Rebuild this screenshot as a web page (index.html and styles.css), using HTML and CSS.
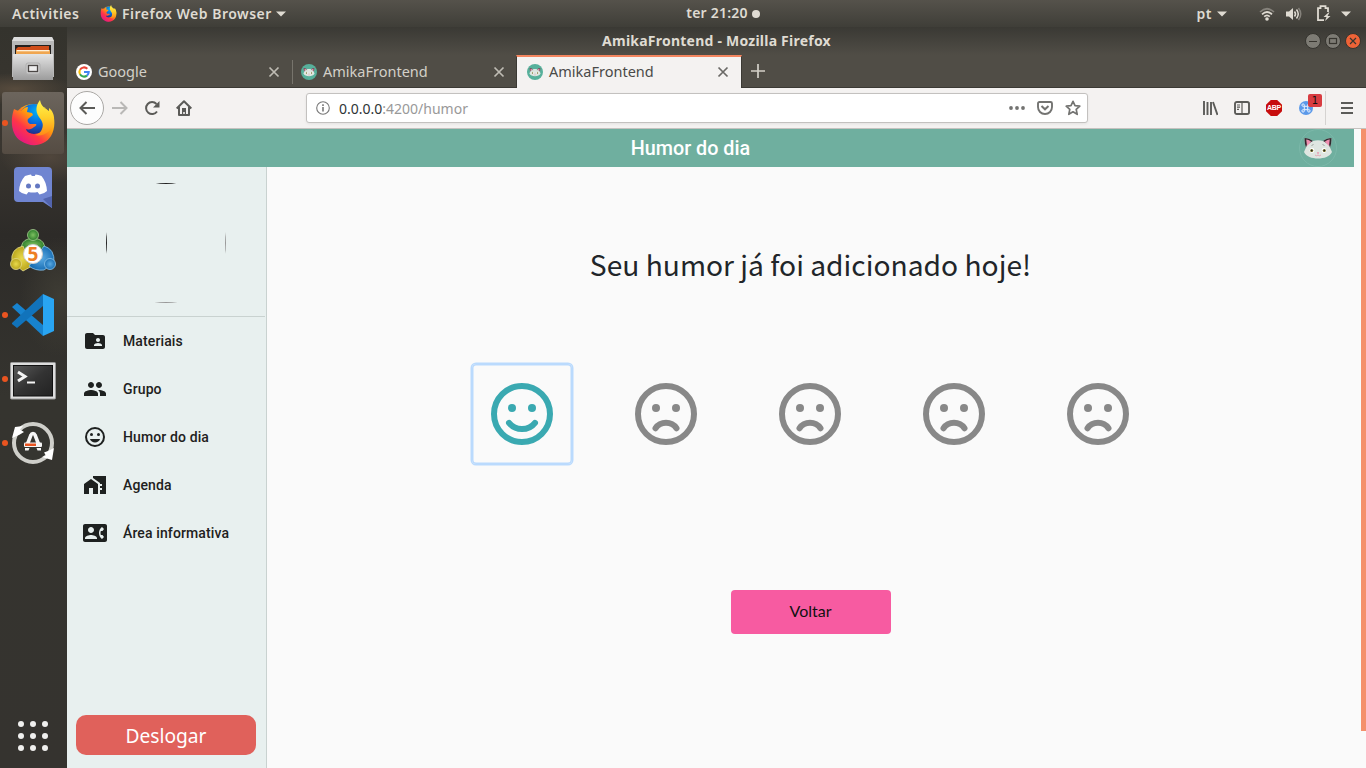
FILE: index.html
```
<!DOCTYPE html>
<html lang="pt">
<head>
<meta charset="utf-8">
<title>AmikaFrontend</title>
<link rel="stylesheet" href="styles.css">
</head>
<body>
<svg width="0" height="0" class="defs">
  <defs>
    <linearGradient id="ffBody" x1="0.85" y1="0.1" x2="0.15" y2="0.9"><stop offset="0" stop-color="#ffe226"/><stop offset=".35" stop-color="#ff980e"/><stop offset=".65" stop-color="#ff3647"/><stop offset="1" stop-color="#e31587"/></linearGradient>
    <linearGradient id="ffTail" x1="0" y1="0" x2="0" y2="1"><stop offset="0" stop-color="#fff44f"/><stop offset=".5" stop-color="#ffd02a"/><stop offset="1" stop-color="#ff8a16"/></linearGradient>
    <radialGradient id="ffGlobe" cx=".6" cy=".25" r=".8"><stop offset="0" stop-color="#00b3f4"/><stop offset=".5" stop-color="#0a69dd"/><stop offset="1" stop-color="#24287e"/></radialGradient>
    <linearGradient id="steel" x1="0" y1="0" x2="0" y2="1"><stop offset="0" stop-color="#e4e4e4"/><stop offset="1" stop-color="#9c9c9c"/></linearGradient>
    <linearGradient id="screen" x1="0" y1="0" x2="1" y2="1"><stop offset="0" stop-color="#5a5a5a"/><stop offset=".5" stop-color="#333"/><stop offset="1" stop-color="#222"/></linearGradient>
    <radialGradient id="mtG"><stop offset="0" stop-color="#7cc060"/><stop offset="1" stop-color="#2d7d2b"/></radialGradient>
    <radialGradient id="mtY"><stop offset="0" stop-color="#e9da4c"/><stop offset="1" stop-color="#b9a51c"/></radialGradient>
    <radialGradient id="mtB"><stop offset="0" stop-color="#5aaae2"/><stop offset="1" stop-color="#1a6fb5"/></radialGradient>
    <symbol id="firefox" viewBox="0 0 44 46">
      <circle cx="22" cy="24" r="20" fill="url(#ffBody)"/>
      <circle cx="23" cy="19" r="15" fill="url(#ffGlobe)"/>
      <path d="M3 9C-1 20 0 35 10 41c10 7 24 5 30-5 3-5 4-12 3-17-3 8-7 14-13 15-8 2-14-1-15-5 3 1 6 0 8-2 2-1 3-2 2-3h-6c-2-1-3-3-2-5l5-4-1-2-5-1 1-5c-3 0-5 2-7 4-3 0-5-1-7-2z" fill="url(#ffBody)"/>
      <path d="M29 0c-4 5-5 11-1 17 3 4 5 7 3 12-1 3-3 5-7 6 9 2 17-4 19-13 1-7-2-12-5-14v3c-4-2-8-5-9-11z" fill="url(#ffTail)"/>
    </symbol>
    <symbol id="cat" viewBox="0 0 30 24">
      <path d="M1.500 2c3 0 6 1 8.500 3 3-1 7-1 10 0 2.500-2 5.500-3 8.500-3 0 4-.5 7-1.500 9.500l2 4.500c-2 4.500-8 6.500-14 6.500S3 20.500 1 16l2-4.500C2 9 1.500 6 1.500 2z" fill="#dfe6e1"/>
      <path d="M1.500 2c3 0 6 1 8.500 3l-1.500.8-4.500 3L3 11.500C2 9 1.500 6 1.500 2zM28.500 2c-3 0-6 1-8.500 3l1.500.8 4.500 3 1 2.700C28 9 28.500 6 28.500 2z" fill="#30282d"/>
      <path d="M3.200 3.500c2 .2 3.800 1 5 2.200L4 10zM26.800 3.500c-2 .2-3.800 1-5 2.200L26 10z" fill="#f08fb0"/>
      <circle cx="9" cy="14.500" r="2.400" fill="#fff"/><circle cx="21" cy="14.500" r="2.400" fill="#fff"/>
      <circle cx="8.700" cy="14.500" r="1.600" fill="#8e8630"/><circle cx="21.300" cy="14.500" r="1.600" fill="#8e8630"/>
      <circle cx="8.700" cy="14.500" r=".9" fill="#222"/><circle cx="21.300" cy="14.500" r=".9" fill="#222"/>
      <path d="M13.800 16.500h2.400l-1.200 1.500z" fill="#f06b93"/><path d="M12 19q1.500 1.500 3 0q1.500 1.500 3 0" fill="none" stroke="#e39bab" stroke-width=".9"/><path d="M8.500 9.500l2-1M19.500 8.500l2 1" stroke="#8b8f8a" stroke-width=".8"/>
    </symbol>
    <symbol id="sad" viewBox="0 0 62 62">
      <circle cx="31" cy="31" r="28" fill="none" stroke="currentColor" stroke-width="6"/>
      <circle cx="21" cy="25" r="4" fill="currentColor"/><circle cx="41" cy="25" r="4" fill="currentColor"/>
      <path d="M20.500 45.300c5-7.300 16-7.300 21 0" fill="none" stroke="currentColor" stroke-width="6" stroke-linecap="round"/>
    </symbol>
    <symbol id="close" viewBox="0 0 12 12"><path d="M1.500 1.500l9 9m0-9l-9 9" stroke="currentColor" stroke-width="1.700" fill="none"/></symbol>
    <symbol id="down" viewBox="0 0 10 6"><path d="M0 .5h10L5 5.500z" fill="currentColor"/></symbol>
  </defs>
</svg>

<header class="panel">
  <div class="panel-left"><span class="activities">Activities</span><svg class="ff-small"><use href="#firefox"/></svg><span class="app-name">Firefox Web Browser</span><svg class="down"><use href="#down"/></svg></div>
  <div class="clock"><span>ter 21:20</span><i></i></div>
  <div class="tray">
    <span>pt</span><svg class="down"><use href="#down"/></svg>
    <svg class="wifi" viewBox="0 0 16 14"><g fill="none" stroke-width="1.700"><path d="M1 5q7-6.500 14 0" stroke="#85827b"/><path d="M3 7.300q5-4.600 10 0M5.200 9.700q2.800-2.600 5.600 0" stroke="#dfdbd2"/></g><circle cx="8" cy="12" r="1.800" fill="#dfdbd2"/></svg>
    <svg class="volume" viewBox="0 0 16 14"><path d="M0 4.500h3L7 1v12L3 9.500H0z" fill="#dfdbd2"/><path d="M8.500 4.500q2 2.500 0 5M10.500 2.500q3.500 4.500 0 9" stroke="#dfdbd2" stroke-width="1.500" fill="none"/><path d="M12.500 1q4.500 6 0 12" stroke="#85827b" stroke-width="1.500" fill="none"/></svg>
    <svg class="battery" viewBox="0 0 15 17"><path d="M8 15.200H2V3.200h2.500V1.200h5v2H12V7" fill="none" stroke="#dfdbd2" stroke-width="1.800"/><path d="M12.500 7.500l-5 4.500h3l-1.500 4 5.500-5h-3l2-3.500z" fill="#dfdbd2"/></svg>
    <svg class="down"><use href="#down"/></svg>
  </div>
</header>

<div class="desktop">
  <nav class="dock">
    <div class="slot"><svg width="44" height="46" viewBox="0 0 44 46"><path d="M3 1h38l2 4v36H1V5z" fill="#b9b9b9"/><path d="M3 1h38l2 4H1z" fill="#ddd"/><path d="M4 9h36v9H4z" fill="#24211f"/><path d="M7 11h12l1-1h18v6H5v-3z" fill="#cf4d19"/><path d="M5 14h34v5H5z" fill="#f0a650"/><path d="M6 14h32v1.300H6z" fill="#fff0d8"/><path d="M2 18h40v26H2z" fill="url(#steel)"/><rect x="15" y="27" width="14" height="11" rx="2" fill="#ccc" stroke="#b0b0b0"/><rect x="17.500" y="29.500" width="9" height="6" fill="#eee" stroke="#4b4745" stroke-width="1.300"/></svg></div>
    <div class="slot active"><b class="dot"></b><svg width="44" height="46"><use href="#firefox"/></svg></div>
    <div class="slot"><svg width="38" height="42" viewBox="0 0 38 42"><path d="M4 1h30q4 0 4 4v37l-9-6H4q-4 0-4-4V5q0-4 4-4z" fill="#7085d1"/><path d="M29 33l9 9V30z" fill="#5264ad"/><path d="M11 10q4-1.500 6-1.500l.8 1.500h3l.7-1.500q3 0 6 1.500 5 6 5.500 15-3 3-7.500 3.500L23.500 26q-4.500 1-9 0L12.500 28.500Q8 28 5 25q.5-9 6-15z" fill="#fff"/><circle cx="14.500" cy="20" r="2.500" fill="#6478c2"/><circle cx="23.500" cy="20" r="2.500" fill="#6478c2"/></svg></div>
    <div class="slot"><svg width="46" height="46" viewBox="0 0 46 46"><path d="M11 22q0-9 7-11h10q7 2 7 11z" fill="url(#mtG)" stroke="#a9cf93" stroke-width=".8"/><circle cx="23" cy="7" r="5.500" fill="url(#mtG)" stroke="#a9cf93" stroke-width=".8"/><path d="M2 34Q0 21 13 18l9 20-9 5z" fill="url(#mtY)" stroke="#e4dc8c" stroke-width=".8"/><circle cx="6" cy="36" r="5.500" fill="url(#mtY)" stroke="#e4dc8c" stroke-width=".8"/><path d="M19 38l15-20q11 3 10 17l-10 7q-9 1-15-4z" fill="url(#mtB)" stroke="#8cc4ea" stroke-width=".8"/><circle cx="40" cy="36" r="5.500" fill="url(#mtB)" stroke="#8cc4ea" stroke-width=".8"/><circle cx="23" cy="26" r="9.500" fill="#fff" stroke="#ccc"/><text x="23" y="32.500" text-anchor="middle" class="five">5</text></svg></div>
    <div class="slot"><b class="dot"></b><svg width="44" height="44" viewBox="0 0 44 44"><path d="M1 14l5-4L32 32v11z" fill="#1783cf"/><path d="M1 30L32 1v12L6 35l-5-4z" fill="#1173bb"/><path d="M32 1l11 5v32l-11 5z" fill="#29a5f2"/></svg></div>
    <div class="slot terminal"><b class="dot"></b><svg width="46" height="38" viewBox="0 0 46 38"><rect x=".5" y=".5" width="45" height="36.500" rx="1" fill="#ddd" stroke="#999"/><rect x="3.500" y="3.500" width="39" height="30.500" fill="url(#screen)" stroke="#111"/><path d="M8 10l7 4.500L8 19" fill="none" stroke="#f4f4f4" stroke-width="3"/><path d="M17 20.500h8" stroke="#f4f4f4" stroke-width="2"/></svg></div>
    <div class="slot"><b class="dot"></b><svg width="44" height="44" viewBox="0 0 44 44"><circle cx="22" cy="22" r="19" fill="#353530" stroke="#cfcfca" stroke-width="4"/><path d="M1 17L4 6l8-1-3 3.500 4 2.500-5 3zM43 27l-2 12-10-3 4-1.500-2-3 4-1.500z" fill="#fff"/><path d="M16.500 23l3.500-9q.5-1.500 2-1.500t2 1.500l3.500 9" fill="none" stroke="#f6f6f6" stroke-width="3.600"/><rect x="13" y="21.500" width="18" height="4.500" rx="1" fill="#f6f6f6"/><path d="M14 22.500h11v2.500H14z" fill="#e95420"/><path d="M14 27h4.500l-1 2.500H14zM30 27h-4.500l1 2.500H30z" fill="#f6f6f6"/></svg></div>
    <div class="apps"><i></i><i></i><i></i><i></i><i></i><i></i><i></i><i></i><i></i></div>
  </nav>

  <section class="window">
    <div class="titlebar"><span>AmikaFrontend - Mozilla Firefox</span>
      <svg class="controls" width="56" height="16" viewBox="0 0 56 16"><g stroke="#35342f"><circle cx="8" cy="8" r="7.500" fill="#7d7b74"/><circle cx="28" cy="8" r="7.500" fill="#7d7b74"/><circle cx="48" cy="8" r="7.500" fill="#ee6337"/></g><g fill="none" stroke="#37352f" stroke-width="1.200"><path d="M4 8.500h8M45 5l6 6m0-6l-6 6"/><rect x="24.500" y="5.500" width="7" height="5"/></g></svg>
    </div>
    <div class="tabs">
      <div class="tab"><svg width="16" height="16" viewBox="0 0 16 16"><circle cx="8" cy="8" r="8" fill="#fff"/><g fill="none" stroke-width="2.100"><path d="M4 5.700A4.700 4.700 0 0 1 11.300 4.700" stroke="#ea4335"/><path d="M4 5.700a4.700 4.700 0 0 0 0 4.600" stroke="#fbbc05"/><path d="M4 10.300a4.700 4.700 0 0 0 7 1.300" stroke="#34a853"/><path d="M8 8h4.700q0 2.200-1.700 3.600" stroke="#4285f4"/></g></svg><span>Google</span><svg class="close"><use href="#close"/></svg></div>
      <div class="tab divided"><svg width="16" height="16"><circle cx="8" cy="8" r="8" fill="#57b09b"/><use href="#cat" x="2" y="3" width="12" height="10"/></svg><span>AmikaFrontend</span><svg class="close"><use href="#close"/></svg></div>
      <div class="tab current"><svg width="16" height="16"><circle cx="8" cy="8" r="8" fill="#57b09b"/><use href="#cat" x="2" y="3" width="12" height="10"/></svg><span>AmikaFrontend</span><svg class="close"><use href="#close"/></svg></div>
      <svg class="plus" width="14" height="14" viewBox="0 0 14 14"><path d="M7 0v14M0 7h14" stroke="#d3d0c8" stroke-width="1.700"/></svg>
    </div>
    <div class="toolbar">
      <div class="back"><svg width="16" height="14" viewBox="0 0 16 14"><path d="M16 7H1.500M7.500 1l-6 6 6 6" fill="none" stroke="#5b5b58" stroke-width="2"/></svg></div>
      <svg class="forward" width="16" height="14" viewBox="0 0 16 14"><path d="M0 7h14.500M8.500 1l6 6-6 6" fill="none" stroke="#b9b8b6" stroke-width="2"/></svg>
      <svg class="reload" width="16" height="16" viewBox="0 0 16 16"><path d="M13 11.500A6 6 0 1 1 12.500 4" fill="none" stroke="#5b5b58" stroke-width="2"/><path d="M15.500 1v6.500H9z" fill="#5b5b58"/></svg>
      <svg class="home" width="16" height="16" viewBox="0 0 16 16"><path d="M.7 8.500L8 1.300l7.300 7.200M3 7v8h10V7" fill="none" stroke="#5b5b58" stroke-width="2" stroke-linejoin="round"/><path d="M6 8h4v7H8.800v-3H7.200v3H6z" fill="#5b5b58"/></svg>
      <div class="urlbar">
        <svg width="14" height="14" viewBox="0 0 14 14"><circle cx="7" cy="7" r="6.300" fill="none" stroke="#777" stroke-width="1.100"/><path d="M7 6v4.500M7 3.200v1.700" stroke="#777" stroke-width="1.600"/></svg>
        <span class="url"><b>0.0.0.0</b>:4200/humor</span>
        <svg class="more" width="16" height="4" viewBox="0 0 16 4"><g fill="#737371"><circle cx="2" cy="2" r="1.900"/><circle cx="8" cy="2" r="1.900"/><circle cx="14" cy="2" r="1.900"/></g></svg>
        <svg class="pocket" width="16" height="14" viewBox="0 0 16 14"><path d="M2.500 1h11q1.500 0 1.500 1.500V6q0 3-2 5t-5 2-5-2-2-5V2.500Q1 1 2.500 1z" fill="none" stroke="#737371" stroke-width="1.900"/><path d="M4.500 5L8 8.300 11.500 5" fill="none" stroke="#737371" stroke-width="2"/></svg>
        <svg class="star" width="16" height="16" viewBox="0 0 16 16"><path d="M8 1.300l2 4.400 4.800.5-3.600 3.200 1 4.900L8 11.800l-4.200 2.500 1-4.900L1.200 6.200 6 5.700z" fill="none" stroke="#737371" stroke-width="1.700" stroke-linejoin="round"/></svg>
      </div>
      <div class="tools">
        <svg width="16" height="16" viewBox="0 0 16 16"><path d="M2 1v14M5.500 2v13M9 2v13M11 2L15.500 15" stroke="#5b5b58" stroke-width="1.900"/></svg>
        <svg width="16" height="14" viewBox="0 0 16 14"><rect x="1" y="1" width="14" height="12" rx="1.800" fill="none" stroke="#5b5b58" stroke-width="1.900"/><path d="M8 1v12M3 4h3M3 6.200h3M3 8.400h2" stroke="#5b5b58" stroke-width="1.200"/></svg>
        <div class="adblock">ABP</div>
        <div class="ext"><svg width="14" height="14" viewBox="0 0 14 14"><circle cx="7" cy="7" r="7" fill="#5b99e9"/><path d="M5.300 5.300h3.400v3.400H5.300zM5.300 5.300H4.200A1.200 1.200 0 1 1 5.300 4.200zM8.700 5.300V4.200a1.200 1.200 0 1 1 1.100 1.100zM8.700 8.700h1.100a1.200 1.200 0 1 1-1.100 1.100zM5.300 8.700v1.100a1.200 1.200 0 1 1-1.100-1.100z" fill="none" stroke="#e9f3ff"/></svg><span class="badge">1</span></div>
        <div class="menu"><svg width="12" height="12" viewBox="0 0 12 12"><path d="M0 1h12M0 6h12M0 11h12" stroke="#5b5b58" stroke-width="1.900"/></svg></div>
      </div>
    </div>

    <div class="page">
      <div class="app">
        <header class="appbar"><h1>Humor do dia</h1><div class="mascot"><svg width="30" height="24"><use href="#cat"/></svg></div></header>
        <div class="body">
          <aside class="sidebar">
            <div class="profile"><div class="avatar"><div class="photo"></div></div></div>
            <ul>
              <li><svg viewBox="0 0 24 24"><path d="M20 6h-8l-2-2H4c-1.100 0-1.990.9-1.990 2L2 18c0 1.100.9 2 2 2h16c1.100 0 2-.9 2-2V8c0-1.100-.9-2-2-2zm-5 3c1.100 0 2 .9 2 2s-.9 2-2 2-2-.9-2-2 .9-2 2-2zm4 8h-8v-1c0-1.330 2.670-2 4-2s4 .67 4 2v1z"/></svg><span>Materiais</span></li>
              <li><svg viewBox="0 0 24 24"><path d="M16 11c1.660 0 2.990-1.340 2.990-3S17.660 5 16 5c-1.660 0-3 1.340-3 3s1.340 3 3 3zm-8 0c1.660 0 2.990-1.340 2.990-3S9.660 5 8 5C6.340 5 5 6.340 5 8s1.340 3 3 3zm0 2c-2.330 0-7 1.170-7 3.500V19h14v-2.500c0-2.330-4.670-3.500-7-3.500zm8 0c-.29 0-.62.020-.97.050 1.160.84 1.970 1.970 1.970 3.450V19h6v-2.500c0-2.330-4.670-3.500-7-3.500z"/></svg><span>Grupo</span></li>
              <li><svg viewBox="0 0 24 24"><circle cx="12" cy="12" r="9" fill="none" stroke="currentColor" stroke-width="2"/><circle cx="8.500" cy="9.500" r="1.500"/><circle cx="15.500" cy="9.500" r="1.500"/><path d="M12 17.500c2.330 0 4.310-1.460 5.110-3.500H6.890c.8 2.040 2.780 3.500 5.110 3.500z"/></svg><span>Humor do dia</span></li>
              <li><svg viewBox="0 0 24 24"><path d="M1 11v10h5v-6h4v6h5V11L8 6z"/><path d="M10 3v1.970l7 5V11h2v2h-2v2h2v2h-2v4h6V3H10z"/></svg><span>Agenda</span></li>
              <li><svg viewBox="0 0 24 24"><path d="M22 3H2C.9 3 0 3.900 0 5v14c0 1.100.9 2 2 2h20c1.100 0 1.990-.9 1.990-2L24 5c0-1.100-.9-2-2-2zM8 6c1.660 0 3 1.340 3 3s-1.340 3-3 3-3-1.340-3-3 1.340-3 3-3zm6 12H2v-1c0-2 4-3.100 6-3.100s6 1.100 6 3.100v1zm3.850-4h1.640L21 16l-1.990 1.990c-1.310-.98-2.280-2.380-2.730-3.990-.18-.64-.28-1.310-.28-2s.1-1.360.28-2c.45-1.620 1.420-3.010 2.730-3.990L21 8l-1.510 2h-1.640c-.22.63-.35 1.300-.35 2s.13 1.370.35 2z"/></svg><span>Área informativa</span></li>
            </ul>
            <button class="logout">Deslogar</button>
          </aside>
          <main>
            <h2>Seu humor já foi adicionado hoje!</h2>
            <div class="moods">
              <button class="mood selected"><svg viewBox="0 0 62 62"><circle cx="31" cy="31" r="28" fill="none" stroke="currentColor" stroke-width="6"/><circle cx="21" cy="25" r="4" fill="currentColor"/><circle cx="41" cy="25" r="4" fill="currentColor"/><path d="M18 39.800c6.500 8.300 19.500 8.300 26 0" fill="none" stroke="currentColor" stroke-width="6" stroke-linecap="round"/></svg></button>
              <button class="mood"><svg><use href="#sad"/></svg></button>
              <button class="mood"><svg><use href="#sad"/></svg></button>
              <button class="mood"><svg><use href="#sad"/></svg></button>
              <button class="mood"><svg><use href="#sad"/></svg></button>
            </div>
            <button class="voltar">Voltar</button>
          </main>
        </div>
      </div>
      <div class="scroll"></div>
    </div>
  </section>
</div>
</body>
</html>
```
FILE: styles.css
```
* { box-sizing: border-box; }
body { margin: 0; width: 1366px; height: 768px; overflow: hidden; font-family: "Noto Sans", sans-serif; font-size: 14px; background: #35332f; }
svg { display: block; flex: none; }
button { border: 0; padding: 0; background: none; }
.defs { position: absolute; }

.panel { display: grid; grid-template-columns: 1fr auto 1fr; align-items: center; height: 27px; padding: 0 15px 0 12px; background: linear-gradient(#55524b, #3f3e38); color: #dfdbd2; font-weight: 600; letter-spacing: .5px; line-height: 26px; }
.panel-left, .clock, .tray { display: flex; align-items: center; }
.activities { width: 68px; white-space: nowrap; }
.ff-small { width: 17px; height: 17px; margin: 0 5px 0 20px; }
.down { width: 10px; height: 6px; }
.app-name { width: 149px; margin-right: 5px; white-space: nowrap; }
.clock { gap: 4px; margin-left: 83px; letter-spacing: .2px; }
.clock span { position: relative; top: -1px; }
.clock i { width: 8px; height: 8px; border-radius: 50%; background: #dfdbd2; }
.tray { justify-content: flex-end; }
.tray span { margin-right: 5px; }
.wifi { width: 16px; height: 14px; margin: 0 11px 0 32px; }
.volume { width: 16px; height: 14px; margin-right: 14px; }
.battery { width: 15px; height: 17px; margin-right: 10px; }

.desktop { display: flex; height: 741px; }
.dock { display: flex; flex-direction: column; width: 67px; background: radial-gradient(ellipse 60px 16px at 15px 62px, #574b3d, transparent), radial-gradient(ellipse 50px 26px at 50px 130px, #50463c, transparent), radial-gradient(ellipse 40px 60px at 60px 270px, #3e3c34, transparent), linear-gradient(#34332d, #3a3630 16%, #2d2b28 28%, #35342f 50%, #35332f); }
.slot { display: flex; align-items: center; justify-content: center; position: relative; height: 64px; padding-right: 1px; }
.slot.active::before { content: ""; position: absolute; inset: 1px 3px 1px 2px; border-radius: 3px; background: linear-gradient(#6c655d, #554c43); }
.slot.active svg { position: relative; }
.slot.terminal { padding-top: 3px; }
.dot { position: absolute; z-index: 1; left: 2px; top: 29px; width: 6px; height: 6px; border-radius: 50%; background: #e95420; }
.five { font: 700 19px "Noto Sans", sans-serif; fill: #ee7e25; }
.apps { display: grid; grid-template-columns: repeat(3, 6px); gap: 6px; margin: auto 0 17px 18px; }
.apps i { width: 6px; height: 6px; border-radius: 50%; background: #f0f0ee; }

.window { width: 1299px; }
.titlebar { display: grid; grid-template-columns: 1fr auto 1fr; align-items: center; height: 28px; padding-right: 5px; background: linear-gradient(#3a3934, #504d46); color: #dfdbd2; font-weight: 700; letter-spacing: .23px; }
.titlebar span { grid-column: 2; padding: 0 0 2px 5px; }
.controls { justify-self: end; }
.tabs { display: flex; align-items: center; height: 33px; background: #504d46; border-bottom: 1px solid #3b3934; color: #d3d0c8; font-size: 14.500px; }
.tab { display: flex; align-items: center; width: 225px; height: 33px; padding: 1px 12px 0 9px; }
.tab span { margin: 0 0 1px 6px; }
.close { width: 12px; height: 12px; margin-left: auto; color: #bfbcb4; }
.tab.divided { width: 224px; padding-right: 11px; background: linear-gradient(#77746c, #77746c) 0 5px / 1px 24px no-repeat; margin-left: 0; }
.tab.current { padding: 0 12px 0 10px; border-top: 2px solid #f3855f; border-left: 1px solid #3b3934; border-right: 1px solid #3b3934; width: 226px; background: #f4f2f1; color: #4a4a48; }
.tab.current span { margin-bottom: 3px; }
.tab.current .close { color: #6a6966; }
.plus { margin-left: 9px; }
.toolbar { display: flex; align-items: center; height: 41px; padding-left: 3px; background: #f4f2f1; border-bottom: 1px solid #c5c2bf; }
.back { display: grid; place-items: center; width: 34px; height: 34px; border: 1px solid #aaa8a5; border-radius: 50%; background: #fdfdfd; }
.forward { margin-left: 8px; }
.reload, .home { margin-left: 16px; }
.urlbar { display: flex; align-items: center; width: 782px; height: 30px; margin-left: 114px; padding: 0 6px 0 9px; border: 1px solid #c3c1bf; border-radius: 3px; background: #fff; box-shadow: 0 1px 3px #0001; }
.url { margin: 0 auto 0 9px; color: #999; font-size: 14px; }
.url b { color: #2e3436; font-weight: 400; }
.pocket { margin: 0 12px; }
.tools { display: flex; align-items: center; gap: 16px; height: 34px; margin-left: 114px; }
.adblock { display: flex; align-items: center; justify-content: center; width: 16px; height: 16px; background: #c70d0d; clip-path: polygon(30% 0, 70% 0, 100% 30%, 100% 70%, 70% 100%, 30% 100%, 0 70%, 0 30%); color: #fff; font: 700 7px/16px "Liberation Sans", sans-serif; letter-spacing: -.2px; }
.ext { position: relative; width: 17px; padding-left: 1px; }
.badge { position: absolute; left: 10px; top: -7px; width: 14px; height: 13px; border-radius: 2px; background: #d83c41; color: #111; font: 10px/13px "DejaVu Sans", sans-serif; text-align: center; }
.menu { display: grid; place-items: center; height: 34px; margin-left: -6px; padding-left: 15px; border-left: 1px solid #d5d3d1; }

.page { display: flex; justify-content: space-between; height: 639px; background: #fafafa; }
.scroll { width: 5px; height: 602px; background: #f4906b; }
.app { width: 1287px; }
.appbar { display: grid; grid-template-columns: 1fr auto 1fr; align-items: center; height: 38px; background: #6faf9f; color: #fff; }
.appbar h1 { grid-column: 2; margin: 0; padding-right: 40px; font: 500 19.750px Roboto, sans-serif; }
.mascot { display: grid; place-items: center; justify-self: end; width: 38px; height: 38px; margin-right: 17px; border: 1px solid #7bb8a9; border-radius: 50%; }
.body { display: flex; height: 601px; }
.sidebar { display: flex; flex-direction: column; width: 200px; background: #e8f0ef; border-right: 1px solid #c9d2d0; }
.profile { height: 150px; padding: 16px 0 0 39px; margin-right: 1px; border-bottom: 1px solid #c9d2d0; }
.avatar { width: 120px; height: 120px; border-radius: 50%; overflow: hidden; }
.photo { height: 120px; border: 1px solid; border-color: #242424 #999 #999 #242424; }
.sidebar ul { margin: 0; padding: 0; list-style: none; }
.sidebar li { display: flex; align-items: center; gap: 16px; height: 48px; padding-left: 16px; color: #1e2120; font: 500 14px Roboto, sans-serif; letter-spacing: .12px; }
.sidebar li svg { width: 24px; height: 24px; fill: currentColor; }
.logout { width: 180px; height: 40px; margin: auto 0 13px 9px; border-radius: 10px; background: #e0615b; color: #fff; font: 19.200px "Noto Sans", sans-serif; }
main { display: flex; flex-direction: column; align-items: center; width: 1087px; }
h2 { margin: 74px 0 0; height: 46px; color: #212529; font: 400 28.200px/46px "Noto Sans CJK SC", sans-serif; white-space: nowrap; }
.moods { display: flex; gap: 44px; margin: 77px 2px 0 0; }
.mood { display: grid; place-items: center; width: 100px; height: 100px; border-radius: 4px; color: #888; }
.mood svg { width: 62px; height: 62px; }
.mood.selected { color: #3aa9b1; box-shadow: inset 0 0 0 1.500px #badafd, 0 0 0 1.500px #badafd; }
.voltar { width: 160px; height: 44px; margin-top: 126px; padding-bottom: 3px; border-radius: 4px; background: #f75ba1; color: #111; font: 16px Lato, sans-serif; }
```
